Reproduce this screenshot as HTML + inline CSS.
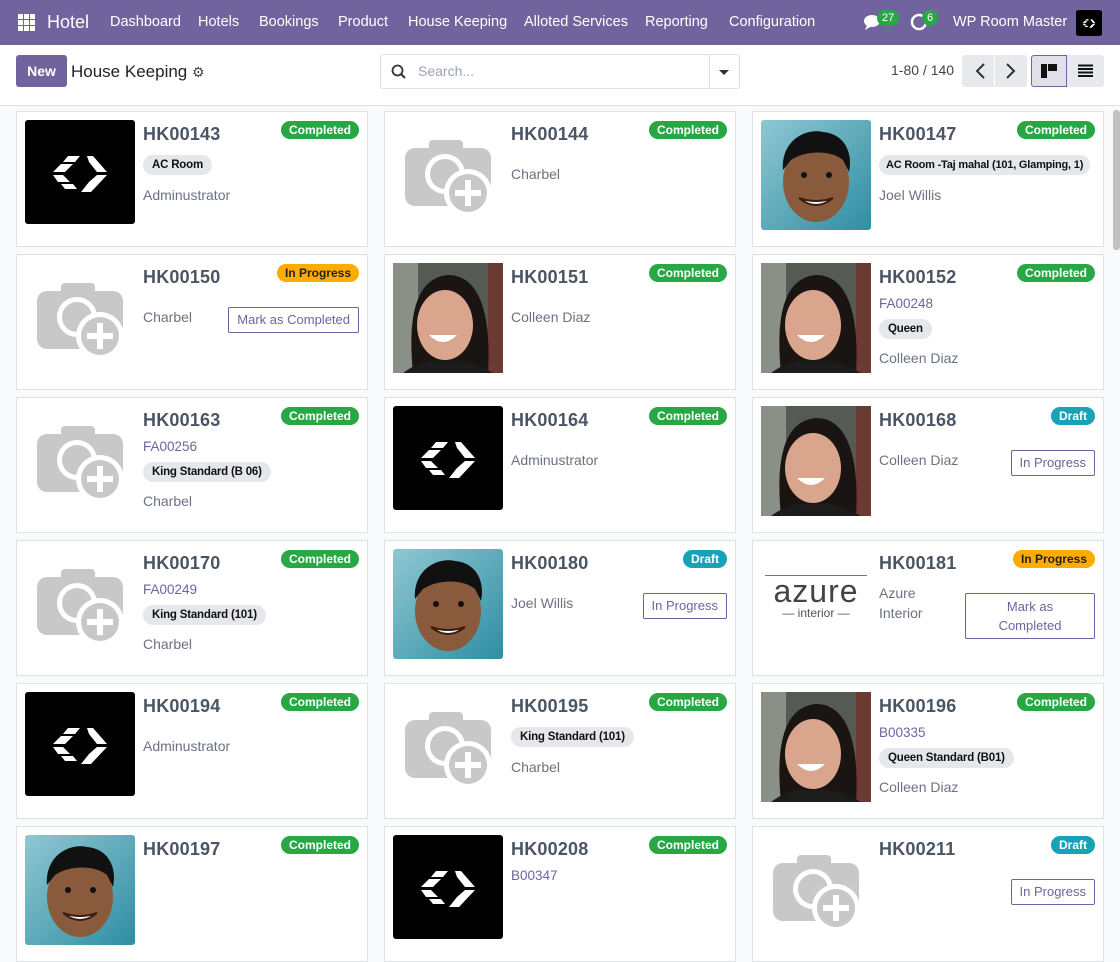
<!DOCTYPE html>
<html><head><meta charset="utf-8">
<style>
*{box-sizing:border-box;margin:0;padding:0}
body{width:1120px;height:880px;overflow:hidden;font-family:"Liberation Sans",sans-serif;background:#f9fafb;color:#374151;position:relative}
.nav{position:absolute;left:0;top:0;width:1120px;height:45px;background:#71639e;color:#fff}
.nav span{position:absolute;top:14px;font-size:14.5px}
.cp{position:absolute;left:0;top:45px;width:1120px;height:61px;background:#fff;border-bottom:1px solid #dee2e6}
.card{position:absolute;width:352px;height:136px;background:#fff;border:1px solid #dee2e6}
.img{position:absolute;left:8px;top:8px;width:110px;height:110px}
.body{position:absolute;left:126px;top:10px;right:8px}
.ti{font-size:18px;font-weight:bold;color:#4b5563;line-height:24px;letter-spacing:0.2px}
.ln{font-size:13.5px;color:#71639e;line-height:20px}
.tg{display:inline-block;background:#e5e7eb;color:#111;font-size:11.5px;font-weight:bold;padding:0 9px;height:20px;line-height:20px;border-radius:10px;white-space:nowrap;letter-spacing:-0.2px}
.nm{font-size:14px;color:#6b7280;line-height:20px}
.bd{position:absolute;right:8px;top:9px;height:18px;line-height:18px;padding:0 8px;border-radius:9px;font-size:12px;font-weight:bold;color:#fff}
.g{background:#28a745}.y{background:#ffac00;color:#222}.d{background:#17a2b8}
.btn{position:absolute;right:8px;top:52px;border:1px solid #71639e;color:#71639e;font-size:13px;border-radius:2px;background:#fff;text-align:center;line-height:24px;padding:0 8px}
</style></head><body>
<svg width="0" height="0" style="position:absolute">
<defs>
<symbol id="logo" viewBox="0 0 110 104"><rect width="110" height="104" rx="3" fill="#000"/>
<g fill="#fff"><polygon points="43,36 55,36 50,42 38,42"/><polygon points="36,44 48,44 40,52 28,52"/><polygon points="62,36 68,36 82,52 72,52 64,42"/><polygon points="28,55 38,55 45,62 33,62"/><polygon points="36,64 48,64 52,69 40,69"/><polygon points="72,55 82,55 66,72 56,72 64,62"/></g></symbol>
<symbol id="cam" viewBox="0 0 110 110"><g fill="#c8c8c8"><rect x="12" y="28" width="86" height="58" rx="10"/><rect x="36" y="20" width="34" height="14" rx="4"/></g>
<circle cx="52" cy="54" r="20" fill="#fff"/><circle cx="52" cy="54" r="15" fill="#c8c8c8"/>
<circle cx="75" cy="73" r="24" fill="#fff"/><circle cx="75" cy="73" r="19" fill="#c8c8c8"/>
<rect x="62" y="70" width="26" height="6" fill="#fff"/><rect x="72" y="60" width="6" height="26" fill="#fff"/></symbol>
<symbol id="man" viewBox="0 0 110 110"><defs><linearGradient id="tb" x1="0" y1="0" x2="1" y2="1"><stop offset="0" stop-color="#8fc7d3"/><stop offset="1" stop-color="#2f8ea3"/></linearGradient></defs>
<rect width="110" height="110" rx="3" fill="url(#tb)"/><ellipse cx="55" cy="62" rx="33" ry="40" fill="#8a5a3c"/>
<path d="M22 50 C20 20 45 8 62 12 C85 14 92 35 88 52 L82 40 C70 30 45 30 30 40 Z" fill="#111"/>
<path d="M38 78 Q55 92 72 78 Q55 84 38 78Z" fill="#fff" stroke="#3a1e10" stroke-width="2"/>
<circle cx="43" cy="55" r="3" fill="#111"/><circle cx="68" cy="55" r="3" fill="#111"/></symbol>
<symbol id="wom" viewBox="0 0 110 110"><rect width="110" height="110" rx="3" fill="#555a55"/><rect x="0" y="0" width="25" height="110" fill="#8a8f88"/><rect x="95" width="15" height="110" fill="#6b3a32"/>
<path d="M20 110 C15 60 20 15 55 12 C90 12 98 60 95 110Z" fill="#1a1412"/>
<ellipse cx="52" cy="62" rx="28" ry="35" fill="#d9a58c"/><path d="M36 72 Q50 86 64 72Z" fill="#fff"/>
<path d="M10 110 Q30 95 52 98 Q75 95 100 110Z" fill="#1c1c1c"/></symbol>
</defs></svg>

<div class="nav">
<svg style="position:absolute;left:18px;top:14px" width="17" height="17" viewBox="0 0 17 17" fill="#fff"><rect x="0" y="0" width="5" height="5"/><rect x="6" y="0" width="5" height="5"/><rect x="12" y="0" width="5" height="5"/><rect x="0" y="6" width="5" height="5"/><rect x="6" y="6" width="5" height="5"/><rect x="12" y="6" width="5" height="5"/><rect x="0" y="12" width="5" height="5"/><rect x="6" y="12" width="5" height="5"/><rect x="12" y="12" width="5" height="5"/></svg>
<span style="left:47px;top:12px;font-size:18px">Hotel</span>
<span style="left:110px">Dashboard</span><span style="left:198px">Hotels</span><span style="left:259px">Bookings</span><span style="left:338px">Product</span><span style="left:408px">House Keeping</span><span style="left:524px">Alloted Services</span><span style="left:645px">Reporting</span><span style="left:729px">Configuration</span>
<svg style="position:absolute;left:864px;top:14px" width="20" height="18" viewBox="0 0 20 18" fill="#fff"><ellipse cx="8" cy="7" rx="8" ry="6"/><path d="M3 11 L1 16 L8 12Z"/></svg>
<div style="position:absolute;left:877px;top:10px;background:#28a745;border-radius:8px;font-size:11px;padding:0 5px;height:16px;line-height:16px;color:#fff">27</div>
<svg style="position:absolute;left:910px;top:13px" width="18" height="18" viewBox="0 0 18 18"><circle cx="9" cy="9" r="7" fill="none" stroke="#fff" stroke-width="2.5"/></svg>
<div style="position:absolute;left:922px;top:10px;background:#28a745;border-radius:8px;font-size:11px;padding:0 5px;height:16px;line-height:16px;color:#fff">6</div>
<span style="left:953px">WP Room Master</span>
<div style="position:absolute;left:1076px;top:10px;width:26px;height:26px;background:#000;border-radius:3px"><svg width="26" height="26" viewBox="0 0 110 104"><use href="#logo"/></svg></div>
</div>

<div class="cp">
<div style="position:absolute;left:16px;top:10px;width:51px;height:32px;background:#71639e;color:#fff;border-radius:3px;font-size:14px;font-weight:bold;text-align:center;line-height:32px">New</div>
<div style="position:absolute;left:71px;top:17px;font-size:17px;color:#222">House Keeping <span style="font-size:14px;color:#444">⚙</span></div>
<div style="position:absolute;left:380px;top:9px;width:360px;height:35px;border:1px solid #dee2e6;border-radius:3px">
<svg style="position:absolute;left:10px;top:9px" width="16" height="16" viewBox="0 0 16 16"><circle cx="6.5" cy="6.5" r="5" fill="none" stroke="#333" stroke-width="1.8"/><path d="M10 10 L14 14" stroke="#333" stroke-width="2"/></svg>
<span style="position:absolute;left:37px;top:8px;font-size:14px;color:#9ca3af">Search...</span>
<div style="position:absolute;right:0;top:0;width:30px;height:33px;border-left:1px solid #dee2e6"></div>
<div style="position:absolute;right:10px;top:15px;border:5px solid transparent;border-top:5px solid #333"></div></div>
<span style="position:absolute;left:891px;top:17px;font-size:14px;color:#444">1-80 / 140</span>
<div style="position:absolute;left:962px;top:10px;width:65px;height:32px;background:#e7e9ed;border-radius:3px;border-right:0"></div>
<div style="position:absolute;left:994px;top:10px;width:1px;height:32px;background:#fff"></div>
<svg style="position:absolute;left:962px;top:10px" width="65" height="32"><path d="M22 9 L15 16 L22 23" fill="none" stroke="#333" stroke-width="2"/><path d="M45 9 L52 16 L45 23" fill="none" stroke="#333" stroke-width="2"/></svg>
<div style="position:absolute;left:1031px;top:10px;width:36px;height:32px;background:#e1dfea;border:1px solid #71639e;border-radius:3px 0 0 3px"></div>
<div style="position:absolute;left:1041px;top:19px;width:6px;height:14px;background:#111"></div><div style="position:absolute;left:1048px;top:19px;width:9px;height:7px;background:#111"></div>
<div style="position:absolute;left:1067px;top:10px;width:37px;height:32px;background:#e7e9ed;border-radius:0 3px 3px 0"></div>
<svg style="position:absolute;left:1078px;top:19px" width="15" height="13"><path d="M0 1.5H15M0 5H15M0 8.5H15M0 12H15" stroke="#111" stroke-width="2"/></svg>
</div>
<div style="position:absolute;left:1113px;top:110px;width:7px;height:140px;background:#c1c1c1;border-radius:3px"></div>

<!-- row1 -->
<div class="card" style="left:16px;top:111px"><svg class="img" style="height:104px" viewBox="0 0 110 104"><use href="#logo"/></svg><div class="body"><div class="ti">HK00143</div><div style="margin-top:9px"><span class="tg">AC Room</span></div><div class="nm" style="margin-top:10px">Adminustrator</div></div><div class="bd g">Completed</div></div>
<div class="card" style="left:384px;top:111px"><svg class="img" viewBox="0 0 110 110"><use href="#cam"/></svg><div class="body"><div class="ti">HK00144</div><div class="nm" style="margin-top:18px">Charbel</div></div><div class="bd g">Completed</div></div>
<div class="card" style="left:752px;top:111px"><svg class="img" viewBox="0 0 110 110"><use href="#man"/></svg><div class="body"><div class="ti">HK00147</div><div style="margin-top:9px"><span class="tg" style="font-size:11px;padding:0 7px">AC Room -Taj mahal (101, Glamping, 1)</span></div><div class="nm" style="margin-top:10px">Joel Willis</div></div><div class="bd g">Completed</div></div>
<!-- row2 -->
<div class="card" style="left:16px;top:254px"><svg class="img" viewBox="0 0 110 110"><use href="#cam"/></svg><div class="body"><div class="ti">HK00150</div><div class="nm" style="margin-top:18px">Charbel</div></div><div class="bd y">In Progress</div><div class="btn">Mark as Completed</div></div>
<div class="card" style="left:384px;top:254px"><svg class="img" viewBox="0 0 110 110"><use href="#wom"/></svg><div class="body"><div class="ti">HK00151</div><div class="nm" style="margin-top:18px">Colleen Diaz</div></div><div class="bd g">Completed</div></div>
<div class="card" style="left:752px;top:254px"><svg class="img" viewBox="0 0 110 110"><use href="#wom"/></svg><div class="body"><div class="ti">HK00152</div><div class="ln" style="margin-top:5px">FA00248</div><div style="margin-top:5px"><span class="tg">Queen</span></div><div class="nm" style="margin-top:9px">Colleen Diaz</div></div><div class="bd g">Completed</div></div>
<!-- row3 -->
<div class="card" style="left:16px;top:397px"><svg class="img" viewBox="0 0 110 110"><use href="#cam"/></svg><div class="body"><div class="ti">HK00163</div><div class="ln" style="margin-top:5px">FA00256</div><div style="margin-top:5px"><span class="tg">King Standard (B 06)</span></div><div class="nm" style="margin-top:9px">Charbel</div></div><div class="bd g">Completed</div></div>
<div class="card" style="left:384px;top:397px"><svg class="img" style="height:104px" viewBox="0 0 110 104"><use href="#logo"/></svg><div class="body"><div class="ti">HK00164</div><div class="nm" style="margin-top:18px">Adminustrator</div></div><div class="bd g">Completed</div></div>
<div class="card" style="left:752px;top:397px"><svg class="img" viewBox="0 0 110 110"><use href="#wom"/></svg><div class="body"><div class="ti">HK00168</div><div class="nm" style="margin-top:18px">Colleen Diaz</div></div><div class="bd d">Draft</div><div class="btn">In Progress</div></div>
<!-- row4 -->
<div class="card" style="left:16px;top:540px"><svg class="img" viewBox="0 0 110 110"><use href="#cam"/></svg><div class="body"><div class="ti">HK00170</div><div class="ln" style="margin-top:5px">FA00249</div><div style="margin-top:5px"><span class="tg">King Standard (101)</span></div><div class="nm" style="margin-top:9px">Charbel</div></div><div class="bd g">Completed</div></div>
<div class="card" style="left:384px;top:540px"><svg class="img" viewBox="0 0 110 110"><use href="#man"/></svg><div class="body"><div class="ti">HK00180</div><div class="nm" style="margin-top:18px">Joel Willis</div></div><div class="bd d">Draft</div><div class="btn">In Progress</div></div>
<div class="card" style="left:752px;top:540px"><div class="img" style="text-align:center;color:#333"><div style="margin:26px 4px 0;border-top:1px solid #777"></div><div style="font-size:32px;line-height:30px;font-weight:300;letter-spacing:1px;color:#444">azure</div><div style="font-size:12px;line-height:14px;color:#555">— interior —</div></div><div class="body"><div class="ti">HK00181</div><div class="nm" style="margin-top:8px;width:70px">Azure Interior</div></div><div class="bd y">In Progress</div><div class="btn" style="width:130px;height:46px;line-height:19px;padding:3px 6px">Mark as<br>Completed</div></div>
<!-- row5 -->
<div class="card" style="left:16px;top:683px"><svg class="img" style="height:104px" viewBox="0 0 110 104"><use href="#logo"/></svg><div class="body"><div class="ti">HK00194</div><div class="nm" style="margin-top:18px">Adminustrator</div></div><div class="bd g">Completed</div></div>
<div class="card" style="left:384px;top:683px"><svg class="img" viewBox="0 0 110 110"><use href="#cam"/></svg><div class="body"><div class="ti">HK00195</div><div style="margin-top:9px"><span class="tg">King Standard (101)</span></div><div class="nm" style="margin-top:10px">Charbel</div></div><div class="bd g">Completed</div></div>
<div class="card" style="left:752px;top:683px"><svg class="img" viewBox="0 0 110 110"><use href="#wom"/></svg><div class="body"><div class="ti">HK00196</div><div class="ln" style="margin-top:5px">B00335</div><div style="margin-top:5px"><span class="tg">Queen Standard (B01)</span></div><div class="nm" style="margin-top:9px">Colleen Diaz</div></div><div class="bd g">Completed</div></div>
<!-- row6 -->
<div class="card" style="left:16px;top:826px"><svg class="img" viewBox="0 0 110 110"><use href="#man"/></svg><div class="body"><div class="ti">HK00197</div></div><div class="bd g">Completed</div></div>
<div class="card" style="left:384px;top:826px"><svg class="img" style="height:104px" viewBox="0 0 110 104"><use href="#logo"/></svg><div class="body"><div class="ti">HK00208</div><div class="ln" style="margin-top:5px">B00347</div></div><div class="bd g">Completed</div></div>
<div class="card" style="left:752px;top:826px"><svg class="img" viewBox="0 0 110 110"><use href="#cam"/></svg><div class="body"><div class="ti">HK00211</div></div><div class="bd d">Draft</div><div class="btn">In Progress</div></div>
</body></html>
